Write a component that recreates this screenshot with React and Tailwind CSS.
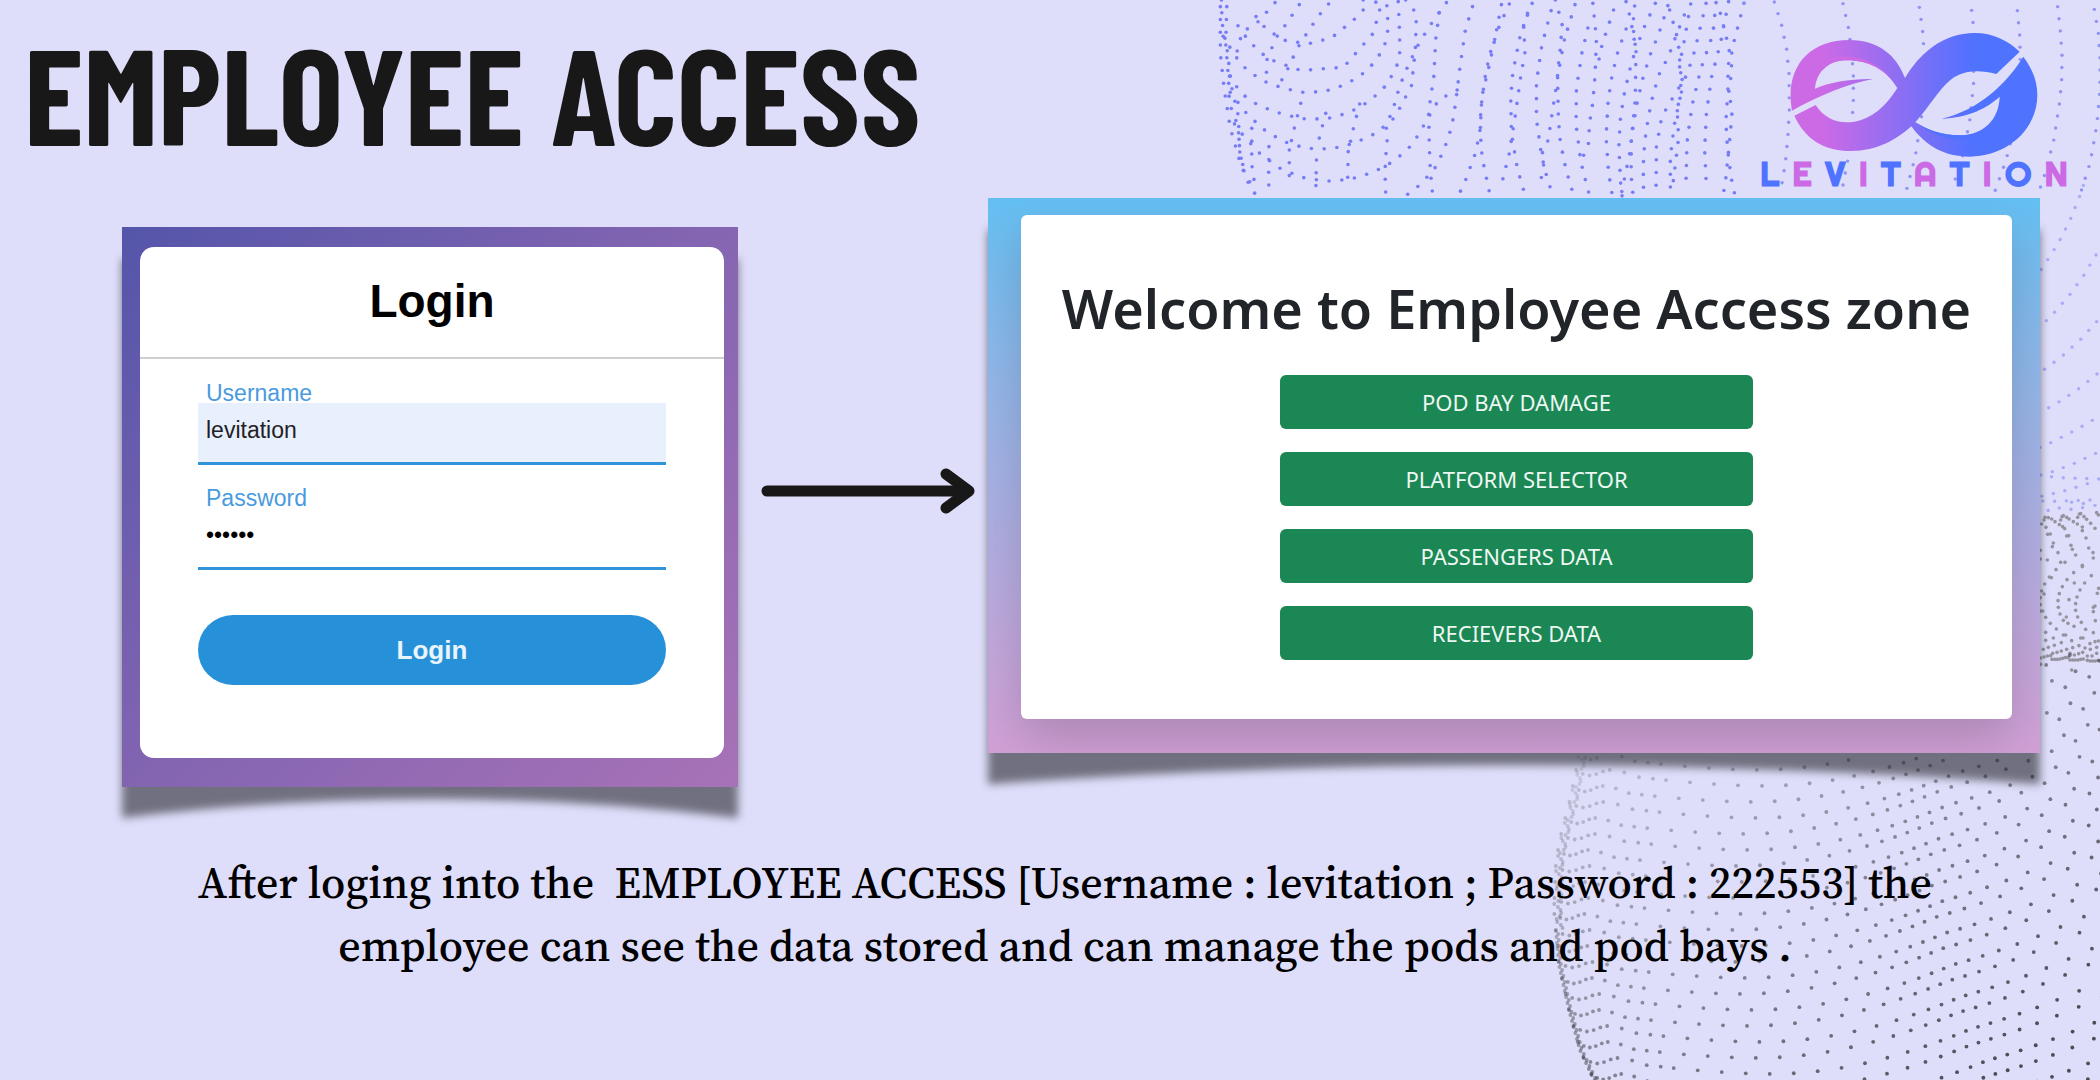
import React from 'react';

/* ---------- dotted background ---------- */

// Places evenly spaced dots along a polyline.
function along(points, step) {
  const out = [];
  let carry = 0;
  for (let i = 1; i < points.length; i++) {
    const [x0, y0] = points[i - 1];
    const [x1, y1] = points[i];
    const len = Math.hypot(x1 - x0, y1 - y0);
    let d = carry;
    while (d < len) {
      out.push([x0 + ((x1 - x0) * d) / len, y0 + ((y1 - y0) * d) / len]);
      d += step;
    }
    carry = d - len;
  }
  return out;
}

const waveLines = [
  [[57, 20], [57, 160], [68, 270], [85, 385], [113, 490], [140, 560], [160, 590]],
  [[75, 20], [72, 130], [80, 240], [82, 310], [107, 380], [112, 460], [127, 530], [157, 567]],
  [[60, 0], [62, 70], [76, 150], [90, 270], [108, 350], [110, 450], [128, 530]],
  [[763, 20], [743, 90], [728, 200], [716, 307], [705, 380], [683, 450], [655, 510], [605, 565], [577, 586]],
  [[866, 12], [838, 78], [815, 150], [800, 218], [786, 327], [785, 400], [790, 473], [811, 580]],
  [[844, 14], [826, 115], [808, 205], [789, 290], [785, 385], [772, 457], [737, 560], [720, 590]],
  [[917, 40], [896, 110], [876, 217], [870, 290], [872, 400], [889, 508], [908, 577]],
  [[930, 10], [906, 75], [910, 157], [898, 230], [882, 352], [866, 460], [841, 567]],
  [[983, 32], [957, 137], [942, 247], [942, 356], [956, 465], [972, 535], [983, 570]],
  [[995, 0], [1014, 72], [1009, 146], [1001, 218], [1003, 338], [1007, 410], [1019, 482], [1036, 552], [1047, 586]],
  [[1020, 120], [1008, 190], [998, 255], [985, 347], [975, 420], [956, 465], [963, 500], [949, 563]],
  [[1050, 14], [1020, 120]],
  [[1086, 84], [1070, 155], [1054, 265], [1053, 374], [1066, 482], [1073, 515], [1091, 588]],
  [[1100, 10], [1110, 118], [1106, 230], [1099, 315], [1091, 368], [1087, 440], [1066, 482]],
  [[1158, 30], [1126, 133], [1112, 205]],
  [[1193, 87], [1170, 155], [1154, 226], [1143, 300], [1137, 410], [1144, 517], [1155, 590]],
  [[1193, 5], [1204, 50], [1221, 148], [1220, 210], [1219, 295], [1212, 370], [1205, 450], [1180, 580]],
  [[1217, 18], [1212, 76], [1220, 147], [1202, 215], [1187, 287], [1177, 358], [1173, 432], [1177, 541], [1182, 590]],
  [[1275, 10], [1246, 76], [1221, 145]],
  [[1310, 17], [1286, 97], [1260, 166], [1240, 235], [1224, 307], [1213, 380], [1208, 410], [1207, 525], [1213, 592]],
  [[1356, 45], [1332, 110], [1310, 175], [1289, 212], [1269, 282], [1255, 354], [1245, 427], [1241, 500], [1242, 572]],
  [[1315, 30], [1339, 122], [1347, 232], [1345, 290], [1328, 375], [1317, 470], [1317, 580]],
  [[1374, 12], [1353, 140], [1342, 195], [1353, 255], [1336, 327], [1340, 415], [1325, 545]],
  [[1417, 10], [1385, 153], [1363, 225], [1320, 300], [1293, 350], [1278, 440], [1277, 568]],
  [[1445, 8], [1436, 103], [1402, 208], [1378, 315], [1364, 423], [1361, 532], [1362, 568]],
  [[1480, 5], [1458, 127], [1432, 233], [1418, 340], [1413, 450], [1418, 560]],
  [[1523, 10], [1489, 150], [1488, 220], [1473, 332], [1474, 405], [1480, 475], [1490, 550], [1498, 586]],
  [[1457, 40], [1482, 148], [1477, 260], [1490, 330], [1485, 400], [1471, 548], [1465, 583]],
  [[670, 38], [660, 118], [655, 227], [640, 335], [642, 435], [645, 513], [651, 580]],
  [[576, 0], [606, 40], [603, 150], [592, 258], [545, 353], [492, 400], [431, 430], [365, 447], [297, 445], [232, 424], [175, 386], [125, 334], [80, 270]],
  [[690, 8], [650, 67], [614, 128], [584, 193], [558, 262], [540, 330], [520, 378], [526, 403], [522, 440], [518, 513], [520, 586]],
  [[555, 5], [558, 75], [560, 150], [556, 186], [525, 252], [477, 302], [418, 338], [352, 357], [283, 356], [207, 335], [155, 310], [115, 280], [65, 200]],
  [[457, 0], [523, 12], [527, 85], [515, 146], [470, 211], [411, 252], [347, 275], [280, 277], [214, 258], [171, 240], [129, 207], [100, 170], [57, 95]],
  [[503, 30], [485, 100], [440, 155], [402, 202], [350, 206], [283, 212], [190, 176], [138, 125], [95, 60]],
  [[457, 30], [430, 60], [370, 112], [313, 130], [245, 125], [187, 90], [142, 30]],
  [[360, 12], [338, 40], [318, 70], [280, 131], [250, 195], [237, 230], [214, 258]],
  [[720, 270], [668, 300], [630, 370], [595, 433], [545, 482], [485, 517], [420, 538], [352, 544], [285, 532], [222, 504], [167, 460], [120, 405], [78, 345]],
  [[145, 385], [145, 493], [155, 567]],
  [[193, 440], [192, 550], [197, 590]],
  [[250, 450], [250, 560]],
  [[326, 480], [324, 590]],
  [[415, 455], [413, 565]],
  [[278, 14], [240, 74], [215, 110], [188, 176], [185, 240]],
  [[210, 8], [163, 65], [118, 97], [100, 170]],
  [[352, 340], [335, 410], [326, 450]],
  [[447, 312], [430, 383], [415, 455]],
  [[282, 310], [265, 380], [250, 450]],
].map((line) => line.map(([x, y]) => [1200 + x / 2.8, y / 3]));

const logoLines = [
  [[12, 9], [2, 44]],
  [[103, 6], [125, 76], [140, 148], [147, 220], [148, 330], [143, 418], [136, 490], [124, 562]],
  [[309, 11], [325, 82], [335, 155], [340, 228], [340, 301], [334, 400], [324, 478], [303, 587]],
  [[538, 22], [548, 94], [553, 167], [553, 270], [543, 364], [525, 473], [497, 579]],
  [[695, 31], [699, 67], [701, 140], [701, 247], [690, 356], [670, 460], [636, 568]],
  [[832, 32], [839, 105], [841, 178], [838, 280], [825, 380], [797, 484], [760, 587]],
  [[953, 20], [961, 93], [966, 166], [965, 240], [958, 314], [941, 422], [913, 528], [890, 595]],
  [[1063, 28], [1075, 100], [1080, 173], [1080, 270], [1070, 378], [1051, 486], [1018, 591]],
].map((line) => line.map(([x, y]) => [1740 + x / 3, y / 3]));

const edgeLines = [
  [[160, 16], [148, 51], [121, 118], [88, 184], [49, 246], [29, 276]],
  [[198, 225], [160, 288], [117, 347], [69, 402], [43, 428]],
  [[200, 425], [151, 479], [97, 528], [38, 572]],
  [[201, 582], [144, 628], [83, 668], [51, 686]],
  [[187, 721], [124, 757], [58, 790], [28, 803]],
  [[197, 820], [131, 851], [62, 877], [29, 886]],
  [[206, 897], [97, 893], [61, 890]],
  [[172, 911], [102, 933], [31, 950]],
  [[180, 960], [69, 964], [31, 963]],
  [[195, 976], [145, 968], [106, 965]],
  [[158, 983], [122, 988], [74, 982], [50, 994]],
].map((line) => line.map(([x, y]) => [2030 + x / 3, 180 + y / 3]));

const ridgeTop = [
  [35, 1032], [42, 1020], [45, 1012], [55, 1013], [65, 1017], [75, 1025], [88, 1034], [98, 1040], [104, 1046],
  [92, 1020], [96, 1010], [100, 1007], [110, 1012], [117, 1017], [130, 1025], [142, 1032], [157, 1041], [157, 1052],
  [143, 1012], [148, 1002], [152, 1001], [162, 1010], [170, 1018], [182, 1030], [195, 1045], [200, 998], [205, 1005],
  [48, 1042], [53, 1063], [61, 1062], [110, 1068], [116, 1067], [168, 1074], [70, 1089], [67, 1100], [123, 1096],
  [127, 1108], [176, 1104], [189, 1118], [31, 1111], [84, 1118], [137, 1125], [190, 1134], [31, 1137], [52, 1140],
  [92, 1147], [105, 1147], [157, 1156], [157, 1160], [78, 1169], [131, 1178], [184, 1187], [58, 1191], [64, 1193],
  [111, 1199], [44, 1212], [97, 1220], [133, 1209], [164, 1209], [150, 1230], [35, 1233], [42, 1242], [88, 1241],
  [206, 1225], [202, 1240], [141, 1251], [31, 1253], [84, 1262], [117, 1259], [137, 1271], [195, 1278], [190, 1282],
  [31, 1274], [85, 1282], [31, 1293], [38, 1293], [90, 1302], [137, 1291], [143, 1311], [190, 1295], [47, 1312],
  [109, 1311], [100, 1321], [61, 1330], [114, 1330], [154, 1327], [196, 1322], [79, 1347], [132, 1339], [167, 1348],
  [47, 1357], [100, 1365], [107, 1365], [152, 1374], [159, 1374], [70, 1374], [190, 1358], [125, 1382], [180, 1391],
  [47, 1381], [94, 1388], [147, 1397], [195, 1385], [205, 1383], [73, 1396], [128, 1403], [181, 1408], [40, 1408],
  [55, 1402], [110, 1408], [165, 1404], [200, 1402], [68, 1420], [81, 1417], [94, 1413], [120, 1420], [133, 1425],
  [146, 1421], [158, 1417], [172, 1428], [186, 1428], [200, 1420], [32, 1434], [42, 1431], [52, 1428], [62, 1427],
  [66, 1438], [74, 1438], [82, 1438], [90, 1437], [98, 1435], [106, 1433], [114, 1432], [120, 1440], [128, 1440],
  [136, 1440], [144, 1440], [152, 1438], [160, 1437], [172, 1441], [180, 1443], [188, 1443], [196, 1443], [204, 1441],
  [32, 1453], [125, 1470],
].map(([x, y]) => [2030 + x / 3, 180 + y / 3]);

// Left silhouette of the grey surface: x for a given y.
function silhouette(y) {
  const stops = [[690, 1588], [760, 1578], [800, 1570], [830, 1562], [860, 1556], [910, 1554], [965, 1559], [1010, 1569], [1050, 1580], [1080, 1594], [1200, 1650], [1600, 1900]];
  for (let i = 1; i < stops.length; i++) {
    if (y <= stops[i][0]) {
      const [ya, xa] = stops[i - 1];
      const [yb, xb] = stops[i];
      return xa + ((xb - xa) * (y - ya)) / (yb - ya);
    }
  }
  return 1900;
}

function surfaceDots() {
  const dots = [];
  for (let k = 0; k < 46; k++) {
    const y0 = 722 + k * 16;
    let u = 0;
    let n = 0;
    while (u < 620) {
      const bump = Math.sin(Math.min(1, u / 380) * Math.PI) * 16;
      const lift = Math.max(0, u - 170);
      const y = y0 + bump - (lift * lift) / 1500 + Math.sin(n * 0.9) * (u < 60 ? 4 : 0);
      const x = silhouette(y0) + u + (k % 2) * Math.min(8, u / 8);
      if (x < 2104 && y < 1084 && (y > 756 || x > 2044) && y > 655) {
        const tone = Math.min(0.8, 0.12 + ((x - 1550) / 550) * 0.42 + Math.max(0, (y - 740) / 340) * 0.34);
        dots.push([x, y, tone]);
      }
      const dense = 1 - 0.5 * Math.exp(-Math.pow((u - 330 - k * 2) / 70, 2));
      u += u < 28 ? 6 : (u < 80 ? 13 : 24) * dense;
      n++;
    }
  }
  for (let y = 757, i = 0; y < 1082; y += 3, i++) {
    const scallop = y < 930 ? Math.abs(Math.sin((y - 757) / 5.2)) * 7 : (i % 2) * 2;
    dots.push([silhouette(y) + scallop, y, 0.1 + ((y - 757) / 325) * 0.35]);
  }
  return dots;
}

const violet = waveLines.flatMap((l) => along(l, 12.8));
const paleViolet = logoLines.flatMap((l) => along(l, 12.2));
const edgeViolet = edgeLines.flatMap((l) => along(l, 11.8));
const surface = surfaceDots();

function Backdrop() {
  return (
    <svg aria-hidden="true" className="absolute inset-0 h-full w-full" viewBox="0 0 2100 1080" preserveAspectRatio="xMaxYMin slice">
      <g fill="#777cf4">
        {violet.map(([x, y], i) => <circle key={i} cx={x} cy={y} r="1.8" />)}
      </g>
      <g fill="#9092f4">
        {paleViolet.map(([x, y], i) => <circle key={i} cx={x} cy={y} r="1.7" />)}
      </g>
      <g fill="#a9abf8">
        {edgeViolet.map(([x, y], i) => <circle key={i} cx={x} cy={y} r="1.7" />)}
      </g>
      <g fill="#94939f">
        {ridgeTop.map(([x, y], i) => <circle key={i} cx={x} cy={y} r="1.8" />)}
      </g>
      <g fill="#25252b">
        {surface.map(([x, y, o], i) => <circle key={i} cx={x} cy={y} r="1.9" opacity={o} />)}
      </g>
    </svg>
  );
}

/* ---------- brand ---------- */

const brandLetters = [
  ['L', 'text-[#4f72ff]'], ['E', 'text-[#cc6ae6]'], ['V', 'text-[#4f72ff]'], ['I', 'text-[#cc6ae6]'], ['T', 'text-[#4f72ff]'],
  ['A', 'text-[#cc6ae6]'], ['T', 'text-[#4f72ff]'], ['I', 'text-[#cc6ae6]'], ['O', 'text-[#4f72ff]'], ['N', 'text-[#cc6ae6]'],
];

function Brand() {
  return (
    <div className="flex w-[308px] flex-col items-center pt-8">
      <svg role="img" aria-label="Levitation logo" className="h-[126px] w-[250px]" viewBox="148 96 750 378">
        <defs>
          <linearGradient id="brand" gradientUnits="userSpaceOnUse" x1="250" y1="0" x2="700" y2="0">
            <stop offset="0" stopColor="#cc6ae6" />
            <stop offset="1" stopColor="#4f72ff" />
          </linearGradient>
        </defs>
        <path
          fill="url(#brand)"
          d="M157 332 C135 210 200 120 330 120 C415 120 470 165 496 234 C540 160 610 99 705 99 C760 99 805 122 840 155 L770 222 C715 208 670 212 635 238 C595 270 570 320 527 367 C560 388 605 406 660 406 C730 405 778 360 780 290 C740 325 690 352 605 356 C720 330 800 250 851 170 C878 205 893 245 893 285 C893 390 800 470 690 470 C615 470 560 440 515 379 C470 420 410 453 335 453 C250 453 195 415 164 347 L228 315 C250 350 285 367 320 367 C385 367 435 325 473 264 C440 210 390 181 320 181 C270 181 232 210 226 266 C270 247 330 236 400 237 C330 250 240 285 157 332 Z"
        />
        <path fill="#cc6ae6" d="M250 185 C320 145 430 180 473 264 C440 210 390 181 320 181 C290 181 265 192 250 210 Z" />
        <path fill="#4f72ff" d="M527 367 C600 425 700 440 765 380 C740 400 700 406 660 406 C605 406 560 388 527 367 Z" />
      </svg>
      <p className="flex w-full justify-between font-['Righteous','Open_Sans',sans-serif] text-[34px] leading-8 font-bold" aria-label="LEVITATION">
        {brandLetters.map(([c, tone], i) => <span key={i} className={tone}>{c}</span>)}
      </p>
    </div>
  );
}

/* ---------- cards ---------- */

// Soft drop shadow whose lower edge curls down at both corners.
function CurledShadow() {
  return (
    <svg aria-hidden="true" className="absolute inset-x-0 top-0 h-[calc(100%+48px)] w-full overflow-visible blur-[4px]" viewBox="0 0 640 608" preserveAspectRatio="none">
      <path fill="#1b1b20" opacity="0.56" d="M0 32 H640 V591 Q320 553 0 591 Z" />
    </svg>
  );
}

function Field({ id, label, type, value, tint }) {
  return (
    <div className="flex flex-col pb-[19px]">
      <label htmlFor={id} className="-mb-1 px-2 text-[23px] leading-7 text-[#4a9ade]">{label}</label>
      <input
        id={id}
        type={type}
        defaultValue={value}
        className={`h-[62px] w-full border-b-[3px] border-[#3293d8] px-2 pb-1 text-[23px] outline-none ${tint}`}
      />
    </div>
  );
}

function LoginCard() {
  return (
    <section className="relative mt-[29px] flex-[616_1_0%]">
      <CurledShadow />
      <div className="relative bg-linear-[135deg,#5455aa,#8465b1_50%,#a872b7] pt-5 pr-[14px] pb-[29px] pl-[18px] font-['Liberation_Sans',Arial,sans-serif]">
        <form className="h-[511px] rounded-[14px] bg-white" onSubmit={(e) => e.preventDefault()}>
          <h2 className="border-b-2 border-[#cfcfd1] pt-[29px] pb-[31px] text-center text-[46px] leading-[50px] font-bold text-black">Login</h2>
          <div className="flex flex-col px-[58px] pt-5">
            <Field id="username" label="Username" type="text" value="levitation" tint="bg-[#e8effd] text-[#1e2226]" />
            <Field id="password" label="Password" type="password" value="222553" tint="bg-white text-black" />
            <button type="submit" className="mt-[26px] h-[70px] rounded-full bg-[#2691d9] text-[26px] font-bold text-[#e9f4fb]">Login</button>
          </div>
        </form>
      </div>
    </section>
  );
}

const zones = ['POD BAY DAMAGE', 'PLATFORM SELECTOR', 'PASSENGERS DATA', 'RECIEVERS DATA'];

function WelcomeCard() {
  return (
    <section className="relative flex-[1052_1_0%]">
      <CurledShadow />
      <div className="relative overflow-hidden bg-linear-to-b from-[#63bff2] to-[#d2a0d6] pt-[17px] pr-7 pb-[34px] pl-[33px] font-['Noto_Sans',sans-serif]">
        <div className="flex h-[504px] flex-col items-center rounded-md bg-white pt-[58px] shadow-[0_20px_48px_rgba(0,0,0,0.17)]">
          <h2 className="text-[54px] leading-[70px] font-semibold whitespace-nowrap text-[#212529]">Welcome to Employee Access zone</h2>
          <div className="mt-8 flex w-[473px] flex-col gap-[23px]">
            {zones.map((z) => (
              <button key={z} type="button" className="h-[54px] rounded-md bg-[#1a8754] text-[22px] text-[#eef7f2]">{z}</button>
            ))}
          </div>
        </div>
      </div>
    </section>
  );
}

function Arrow() {
  return (
    <div className="flex w-[250px] shrink-0 justify-center pt-[268px] pl-[10px]">
      <svg aria-hidden="true" className="h-[50px] w-[214px]" viewBox="0 0 214 50" fill="none" stroke="#181818" strokeLinecap="round" strokeLinejoin="round">
        <path strokeWidth="11" d="M6 25 H204" />
        <path strokeWidth="11" d="M185 8 L208 25 L185 42" />
      </svg>
    </div>
  );
}

export default function App() {
  return (
    <main className="relative flex min-h-screen flex-col overflow-hidden bg-[#dedefa]">
      <Backdrop />
      <header className="relative flex h-[198px] items-start justify-between pr-8 pl-6">
        <h1 className="pt-3 font-['Barlow_Condensed','Open_Sans_Condensed',sans-serif] text-[136px] leading-[160px] font-bold whitespace-nowrap text-[#181818]">EMPLOYEE ACCESS</h1>
        <Brand />
      </header>
      <div className="relative flex items-start pr-[60px] pl-[122px]">
        <LoginCard />
        <Arrow />
        <WelcomeCard />
      </div>
      <p className="relative mt-16 pl-[30px] text-center font-['Source_Serif_4','Noto_Serif',serif] text-[44px] leading-[63px] font-medium text-black">
        After loging into the&nbsp; EMPLOYEE ACCESS [Username : levitation ; Password : 222553] the
        <br />
        employee can see the data stored and can manage the pods and pod bays .
      </p>
    </main>
  );
}
